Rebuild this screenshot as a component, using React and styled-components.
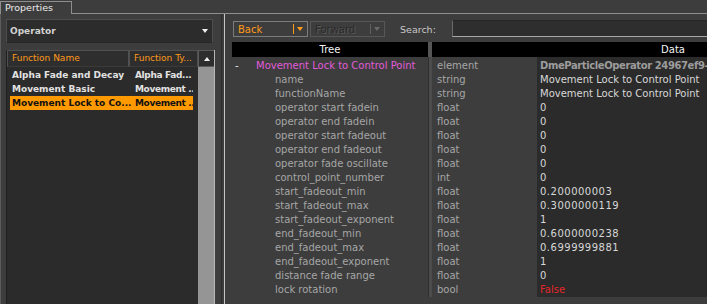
import React from 'react';
import styled, { createGlobalStyle } from 'styled-components';

const Global = createGlobalStyle`
  html, body { margin: 0; padding: 0; background: #3d3d3d; overflow: hidden; }
  body { font-family: "DejaVu Sans", Verdana, sans-serif; }
  * { box-sizing: border-box; }
`;

const Frame = styled.div`
  width: 707px;
  height: 304px;
  display: flex;
  flex-direction: column;
  background: #3d3d3d;
  overflow: hidden;
`;

const TabStrip = styled.div`
  display: flex;
  align-items: flex-end;
  height: 14px;
`;

const Tab = styled.div`
  width: 72px;
  height: 13px;
  border: 1px solid #8e8e8e;
  border-bottom: none;
  background: #3d3d3d;
  color: #ececec;
  font-size: 9.5px;
  line-height: 12px;
  padding-left: 4px;
  white-space: nowrap;
`;

const TabFill = styled.div`
  flex: 1;
  height: 14px;
  border-bottom: 1px solid #8e8e8e;
`;

const Body = styled.div`
  flex: 1;
  display: flex;
  min-height: 0;
  border-left: 1px solid #5c5c5c;
`;

const LeftPanel = styled.div`
  width: 221px;
  display: flex;
  flex-direction: column;
  padding: 5px 0 0 5px;
  border-right: 1px solid #2a2a2a;
`;

const Dropdown = styled.div`
  width: 207px;
  height: 24px;
  display: flex;
  align-items: center;
  justify-content: space-between;
  padding: 0 4px 0 3px;
  background: #2c2c2c;
  border: 1px solid #4e4e4e;
  border-bottom-color: #262626;
  color: #d2d2d2;
  font-size: 9px;
  font-weight: bold;
`;

const Triangle = styled.span`
  width: 0;
  height: 0;
  border-left: ${p => p.$w || 3}px solid transparent;
  border-right: ${p => p.$w || 3}px solid transparent;
  ${p => (p.$up ? 'border-bottom' : 'border-top')}: ${p => p.$h || 4}px solid ${p => p.$color || '#f0f0f0'};
`;

const ListBox = styled.div`
  margin-top: 7px;
  width: 209px;
  flex: 1;
  display: flex;
  border-left: 1px solid #1f1f1f;
`;

const ListMain = styled.div`
  flex: 1;
  display: flex;
  flex-direction: column;
  background: #2b2b2b;
`;

const ListHeader = styled.div`
  display: flex;
  height: 17px;
`;

const HeaderCell = styled.div`
  width: ${p => p.$w}px;
  height: 17px;
  border: 1px solid #505050;
  border-bottom-color: #3a3a3a;
  background: #2e2e2e;
  color: #ff9a1a;
  font-size: 9px;
  line-height: 15px;
  padding-left: 4px;
  white-space: nowrap;
  overflow: hidden;
`;

const ListRows = styled.div`
  padding: 1px 5px 0 3px;
  display: flex;
  flex-direction: column;
`;

const ListRow = styled.div`
  display: grid;
  grid-template-columns: 123px 1fr;
  height: 14px;
  background: ${p => (p.$selected ? '#ff9900' : 'transparent')};
  color: ${p => (p.$selected ? '#111' : '#e2e2e2')};
  font-size: 9px;
  font-weight: bold;
  line-height: 14px;
`;

const ListCell = styled.span`
  padding-left: 2px;
  white-space: nowrap;
  overflow: hidden;
  letter-spacing: ${p => (p.$tight ? '-0.35px' : '0')};
`;

const ScrollCol = styled.div`
  width: 17px;
  display: flex;
  flex-direction: column;
  border-right: 1px solid #b8b8b8;
`;

const ScrollButton = styled.div`
  height: 17px;
  display: flex;
  align-items: center;
  justify-content: center;
  background: #2e2e2e;
  border: 1px solid #5a5a5a;
  border-right: none;
`;

const ScrollTrack = styled.div`
  flex: 1;
  background: #959595;
`;

const Splitter = styled.div`
  width: 2px;
`;

const RightPanel = styled.div`
  flex: 1;
  min-width: 0;
  display: flex;
  flex-direction: column;
  padding: 6px 0 7px 7px;
  border-left: 1px solid #c4c4c4;
  overflow: hidden;
`;

const Toolbar = styled.div`
  display: flex;
  align-items: center;
  height: 18px;
  padding-left: 1px;
`;

const Combo = styled.div`
  width: 75px;
  height: 16px;
  margin-right: ${p => p.$mr || 0}px;
  display: flex;
  align-items: center;
  border: 1px solid ${p => (p.$disabled ? '#575757' : '#7c7c7c')};
  color: ${p => (p.$disabled ? '#2a2a2a' : '#ff9a1a')};
  text-shadow: ${p => (p.$disabled ? '1px 1px 0 #5a5a5a' : 'none')};
  font-size: 10px;
  padding-left: 4px;
`;

const ComboText = styled.span`
  flex: 1;
`;

const ComboDivider = styled.span`
  width: 1px;
  height: 10px;
  background: ${p => p.$color};
  margin-right: 3px;
`;

const ComboArrow = styled.span`
  width: 10px;
  display: flex;
  justify-content: flex-start;
`;

const SearchLabel = styled.span`
  width: 52px;
  margin-left: 15px;
  color: #c8c8c8;
  font-size: 9.5px;
`;

const SearchInput = styled.div`
  flex: 1;
  height: 17px;
  margin-top: -2px;
  background: #2e2e2e;
  border-top: 1px solid #272727;
  border-left: 1px solid #6a6a6a;
  border-bottom: 1px solid #a8a8a8;
`;

const Tree = styled.div`
  margin-top: 4px;
  width: 682px;
  flex: 1;
  display: flex;
  flex-direction: column;
`;

const cols = '196px 4px 105px 377px';

const TreeHeader = styled.div`
  display: grid;
  grid-template-columns: ${cols};
  height: 15px;
`;

const TreeHeadCell = styled.div`
  grid-column: ${p => p.$span || 'auto'};
  background: #000;
  color: #f4f4f4;
  font-size: 10px;
  line-height: 15px;
  text-align: center;
`;

const HeadSep = styled.div`
  background: #555;
`;

const TreeRow = styled.div`
  display: grid;
  grid-template-columns: ${cols};
  height: ${p => (p.$first ? 16 : 14)}px;
  font-size: 10px;
  line-height: 14px;
`;

const NameCell = styled.div`
  display: flex;
  padding-top: ${p => (p.$first ? 2 : 0)}px;
  padding-left: ${p => (p.$root ? 3 : 43)}px;
  color: ${p => (p.$root ? '#e05cd8' : '#a6a6a6')};
  white-space: nowrap;
`;

const Expander = styled.span`
  width: 21px;
  color: #e8e8e8;
`;

const RowSep = styled.div`
  background: #4c4c4c;
  border-left: 1px solid #2e2e2e;
`;

const TypeCell = styled.div`
  padding: ${p => (p.$first ? 2 : 0)}px 0 0 5px;
  color: #a6a6a6;
  white-space: nowrap;
`;

const ValueCell = styled.div`
  padding: ${p => (p.$first ? 2 : 0)}px 0 0 3px;
  background: #2b2b2b;
  white-space: nowrap;
  color: ${p => (p.$kind === 'id' ? '#9c9c9c' : p.$kind === 'bool' ? '#e3262a' : '#d8d8d8')};
  font-weight: ${p => (p.$kind === 'id' ? 'bold' : 'normal')};
  letter-spacing: ${p => (p.$kind === 'num' ? '0.5px' : p.$kind === 'id' ? '-0.4px' : '0')};
`;

const functions = [
  { name: 'Alpha Fade and Decay', type: 'Alpha Fad...' },
  { name: 'Movement Basic', type: 'Movement ...' },
  { name: 'Movement Lock to Co...', type: 'Movement ...', selected: true },
];

const rows = [
  { name: 'Movement Lock to Control Point', type: 'element', value: 'DmeParticleOperator 24967ef9-', kind: 'id', root: true },
  { name: 'name', type: 'string', value: 'Movement Lock to Control Point', kind: 'str' },
  { name: 'functionName', type: 'string', value: 'Movement Lock to Control Point', kind: 'str' },
  { name: 'operator start fadein', type: 'float', value: '0', kind: 'num' },
  { name: 'operator end fadein', type: 'float', value: '0', kind: 'num' },
  { name: 'operator start fadeout', type: 'float', value: '0', kind: 'num' },
  { name: 'operator end fadeout', type: 'float', value: '0', kind: 'num' },
  { name: 'operator fade oscillate', type: 'float', value: '0', kind: 'num' },
  { name: 'control_point_number', type: 'int', value: '0', kind: 'num' },
  { name: 'start_fadeout_min', type: 'float', value: '0.200000003', kind: 'num' },
  { name: 'start_fadeout_max', type: 'float', value: '0.3000000119', kind: 'num' },
  { name: 'start_fadeout_exponent', type: 'float', value: '1', kind: 'num' },
  { name: 'end_fadeout_min', type: 'float', value: '0.6000000238', kind: 'num' },
  { name: 'end_fadeout_max', type: 'float', value: '0.6999999881', kind: 'num' },
  { name: 'end_fadeout_exponent', type: 'float', value: '1', kind: 'num' },
  { name: 'distance fade range', type: 'float', value: '0', kind: 'num' },
  { name: 'lock rotation', type: 'bool', value: 'False', kind: 'bool' },
];

export default function App() {
  return (
    <Frame>
      <Global />
      <TabStrip>
        <Tab>Properties</Tab>
        <TabFill />
      </TabStrip>
      <Body>
        <LeftPanel>
          <Dropdown>
            <span>Operator</span>
            <Triangle $w={3.5} $h={4} />
          </Dropdown>
          <ListBox>
            <ListMain>
              <ListHeader>
                <HeaderCell $w={122}>Function Name</HeaderCell>
                <HeaderCell $w={69}>Function Ty...</HeaderCell>
              </ListHeader>
              <ListRows>
                {functions.map(f => (
                  <ListRow key={f.name} $selected={f.selected}>
                    <ListCell>{f.name}</ListCell>
                    <ListCell $tight>{f.type}</ListCell>
                  </ListRow>
                ))}
              </ListRows>
            </ListMain>
            <ScrollCol>
              <ScrollButton>
                <Triangle $up $w={3.5} $h={4} />
              </ScrollButton>
              <ScrollTrack />
            </ScrollCol>
          </ListBox>
        </LeftPanel>
        <Splitter />
        <RightPanel>
          <Toolbar>
            <Combo $mr={2}>
              <ComboText>Back</ComboText>
              <ComboDivider $color="#ff9a1a" />
              <ComboArrow>
                <Triangle $w={3} $h={4} $color="#ff9a1a" />
              </ComboArrow>
            </Combo>
            <Combo $disabled>
              <ComboText>Forward</ComboText>
              <ComboDivider $color="#606060" />
              <ComboArrow>
                <Triangle $w={3} $h={4} $color="#6a6a6a" />
              </ComboArrow>
            </Combo>
            <SearchLabel>Search:</SearchLabel>
            <SearchInput />
          </Toolbar>
          <Tree>
            <TreeHeader>
              <TreeHeadCell>Tree</TreeHeadCell>
              <HeadSep />
              <TreeHeadCell $span="3 / 5">Data</TreeHeadCell>
            </TreeHeader>
            {rows.map((r, i) => (
              <TreeRow key={r.name} $first={i === 0}>
                <NameCell $root={r.root} $first={i === 0}>
                  {r.root && <Expander>-</Expander>}
                  {r.name}
                </NameCell>
                <RowSep />
                <TypeCell $first={i === 0}>{r.type}</TypeCell>
                <ValueCell $first={i === 0} $kind={r.kind}>{r.value}</ValueCell>
              </TreeRow>
            ))}
          </Tree>
        </RightPanel>
      </Body>
    </Frame>
  );
}
